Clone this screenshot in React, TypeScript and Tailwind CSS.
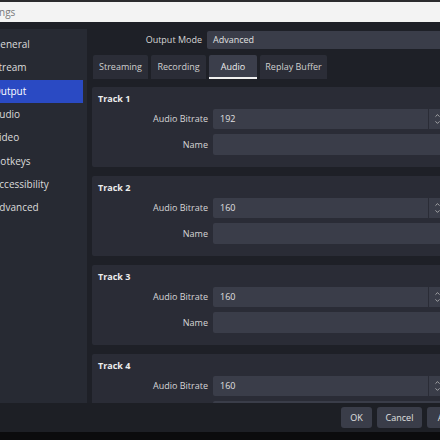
import { ChevronUp, ChevronDown } from 'lucide-react';

const navItems = ['General', 'Stream', 'Output', 'Audio', 'Video', 'Hotkeys', 'Accessibility', 'Advanced'];
const tabs = [
    { label: 'Streaming', w: 'w-[55px]' },
    { label: 'Recording', w: 'w-[55px]' },
    { label: 'Audio', w: 'w-[48px]' },
    { label: 'Replay Buffer', w: 'w-[67px]' },
];
const tracks = [
    { name: 'Track 1', bitrate: '192' },
    { name: 'Track 2', bitrate: '160' },
    { name: 'Track 3', bitrate: '160' },
    { name: 'Track 4', bitrate: '160' },
];

function TrackGroup({ name, bitrate }: { name: string; bitrate: string }) {
    return (
        <div className="h-[80px] shrink-0 bg-[#2a2c36] rounded-[2px] pt-[4px] pl-[6px] pr-[9px]">
            <div className="h-[15px] leading-[15px] font-bold text-[#ececec]">{name}</div>
            <div className="mt-[3px] flex items-center h-[20px]">
                <div className="w-[110px] text-right text-[#d6d6d6]">Audio Bitrate</div>
                <div className="ml-[5px] flex-1 flex h-full">
                    <div className="flex-1 bg-[#3a3d49] rounded-l-[2px] pl-[7px] flex items-center text-[#e0e0e0]">
                        {bitrate}
                    </div>
                    <div className="w-[16px] ml-[1px] bg-[#3a3d49] flex flex-col items-center justify-center text-[#c8c8c8]">
                        <ChevronUp size={7} strokeWidth={2.5} />
                        <ChevronDown size={7} strokeWidth={2.5} />
                    </div>
                </div>
            </div>
            <div className="mt-[5px] flex items-center h-[21px]">
                <div className="w-[110px] text-right text-[#d6d6d6]">Name</div>
                <div className="ml-[5px] flex-1 h-full bg-[#3a3d49] rounded-[2px]" />
            </div>
        </div>
    );
}

export default function App() {
    return (
        <div
            className="w-[440px] h-[440px] flex flex-col overflow-hidden bg-[#1e2027] text-[9px] text-[#dddddd]"
            style={{ fontFamily: '"Open Sans", "Noto Sans", sans-serif' }}
        >
            <div className="h-[2px] shrink-0 bg-[#2b2b2e]" />
            <div className="h-[20px] shrink-0 bg-[#f3f3f3] flex items-center text-[10px] text-[#7a7a7a]">
                <span className="-ml-[1px]">ngs</span>
            </div>

            <div className="flex-1 flex min-h-0">
                <div className="w-[87px] shrink-0 mt-[7px] bg-[#272a33] pt-[4px] flex flex-col">
                    {navItems.map((item) => (
                        <div
                            key={item}
                            className={`h-[23.3px] w-[83px] flex items-center text-[10px] ${
                                item === 'Output' ? 'bg-[#2a4ac3] text-white' : 'text-[#dcdcdc]'
                            }`}
                        >
                            <span className="-ml-[7px]">{item}</span>
                        </div>
                    ))}
                </div>

                <div className="ml-[5px] w-[362px] shrink-0 flex flex-col min-h-0 overflow-hidden">
                    <div className="mt-[9px] h-[18px] flex items-center shrink-0">
                        <div className="w-[110px] text-right text-[#d6d6d6]">Output Mode</div>
                        <div className="ml-[5px] flex-1 h-full bg-[#3a3d49] rounded-[2px] pl-[6px] flex items-center text-[#e0e0e0]">
                            Advanced
                        </div>
                    </div>

                    <div className="mt-[6px] h-[24px] flex gap-[3px] shrink-0 pl-[1px]">
                        {tabs.map((t) => (
                            <div
                                key={t.label}
                                className={`${t.w} h-full rounded-t-[2px] flex items-center justify-center relative ${
                                    t.label === 'Audio' ? 'bg-[#3b3e4b] text-[#eeeeee]' : 'bg-[#2b2d37] text-[#d0d0d0]'
                                }`}
                            >
                                {t.label}
                                {t.label === 'Audio' && (
                                    <div className="absolute left-0 right-0 bottom-0 h-[2px] bg-[#f0f0f0]" />
                                )}
                            </div>
                        ))}
                    </div>

                    <div className="mt-[8px] flex flex-col gap-[9px]">
                        {tracks.map((t) => (
                            <TrackGroup key={t.name} name={t.name} bitrate={t.bitrate} />
                        ))}
                    </div>
                </div>
            </div>

            <div className="h-[29px] shrink-0 bg-[#1d1f25] flex items-center">
                <div className="ml-auto -mr-[32px] flex gap-[5px]">
                    <button className="w-[31px] h-[21px] rounded-[3px] bg-[#3a3d49] text-[#e0e0e0]">OK</button>
                    <button className="w-[45px] h-[21px] rounded-[3px] bg-[#3a3d49] text-[#e0e0e0]">Cancel</button>
                    <button className="w-[45px] h-[21px] rounded-[3px] bg-[#3a3d49] text-[#e0e0e0]">Apply</button>
                </div>
            </div>
            <div className="h-[8px] shrink-0 bg-[#0b0b0d]" />
        </div>
    );
}
